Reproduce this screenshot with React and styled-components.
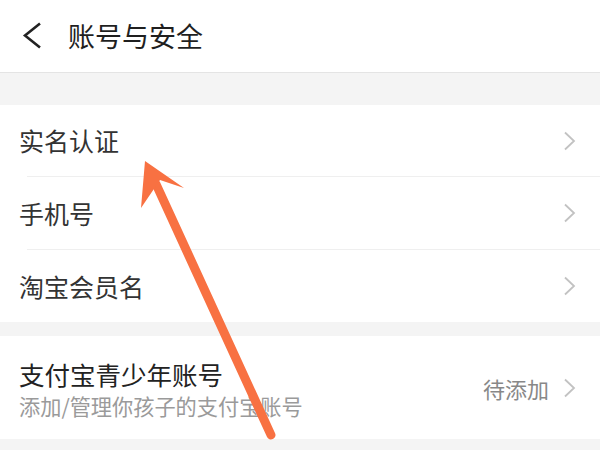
import React from 'react'
import styled, { createGlobalStyle } from 'styled-components'

const GlobalStyle = createGlobalStyle`
  html, body {
    margin: 0;
    padding: 0;
    background: #f4f4f4;
  }
  body {
    font-family: "Noto Sans CJK SC", "Noto Sans", sans-serif;
  }
`

const Page = styled.div`
  position: relative;
  width: 600px;
  height: 450px;
  overflow: hidden;
  background: #f4f4f4;
  display: flex;
  flex-direction: column;
`

const Header = styled.div`
  height: 72px;
  flex-shrink: 0;
  background: #fff;
  border-bottom: 1px solid #e4e4e4;
  display: flex;
  align-items: center;
  padding-left: 22px;
  gap: 26px;
`

const Title = styled.div`
  font-size: 27px;
  color: #1f1f1f;
  line-height: 1;
  margin-top: -1px;
`

const Band = styled.div`
  height: ${p => p.$h}px;
  flex-shrink: 0;
`

const Group = styled.div`
  background: #fff;
  flex-shrink: 0;
`

const Row = styled.div`
  height: ${p => p.$h || 72}px;
  display: flex;
  align-items: center;
  justify-content: space-between;
  padding: 0 24px 0 19px;
`

const Divider = styled.div`
  height: 1px;
  margin-left: 27px;
  background: #efefef;
`

const Label = styled.div`
  font-size: 25px;
  color: #333;
  line-height: 1;
`

const TextCol = styled.div`
  display: flex;
  flex-direction: column;
  gap: 9px;
  margin-top: 2px;
`

const BigLabel = styled.div`
  font-size: 25.5px;
  color: #222;
  line-height: 1;
`

const SubLabel = styled.div`
  font-size: 21.2px;
  color: #9a9a9a;
  line-height: 1;
`

const Right = styled.div`
  display: flex;
  align-items: center;
  gap: 14px;
`

const Status = styled.div`
  font-size: 22px;
  color: #888;
  line-height: 1;
`

const Overlay = styled.svg`
  position: absolute;
  left: 0;
  top: 0;
  pointer-events: none;
`

function Chevron() {
  return (
    <svg width="13" height="20" viewBox="0 0 13 20">
      <path d="M2 1.5 L11 10 L2 18.5" fill="none" stroke="#c2c2c2" strokeWidth="1.8" />
    </svg>
  )
}

function Back() {
  return (
    <svg width="20" height="28" viewBox="0 0 20 28">
      <path d="M18 1.5 L3 13.5 L18 25.5" fill="none" stroke="#222" strokeWidth="2.6" />
    </svg>
  )
}

const rows = ['实名认证', '手机号', '淘宝会员名']

export default function App() {
  return (
    <Page>
      <GlobalStyle />
      <Header>
        <Back />
        <Title>账号与安全</Title>
      </Header>
      <Band $h={32} />
      <Group>
        {rows.map((r, i) => (
          <React.Fragment key={r}>
            {i > 0 && <Divider />}
            <Row $h={i === 0 ? 71 : 72}>
              <Label>{r}</Label>
              <Chevron />
            </Row>
          </React.Fragment>
        ))}
      </Group>
      <Band $h={14} />
      <Group>
        <Row $h={103}>
          <TextCol>
            <BigLabel>支付宝青少年账号</BigLabel>
            <SubLabel>添加/管理你孩子的支付宝账号</SubLabel>
          </TextCol>
          <Right>
            <Status>待添加</Status>
            <Chevron />
          </Right>
        </Row>
      </Group>
      <Overlay width="600" height="450" viewBox="0 0 600 450">
        <line x1="156" y1="184" x2="271" y2="435" stroke="#f87142" strokeWidth="9" strokeLinecap="round" />
        <polygon points="145,161 184,188 160,180 141,208" fill="#f87142" />
      </Overlay>
    </Page>
  )
}
